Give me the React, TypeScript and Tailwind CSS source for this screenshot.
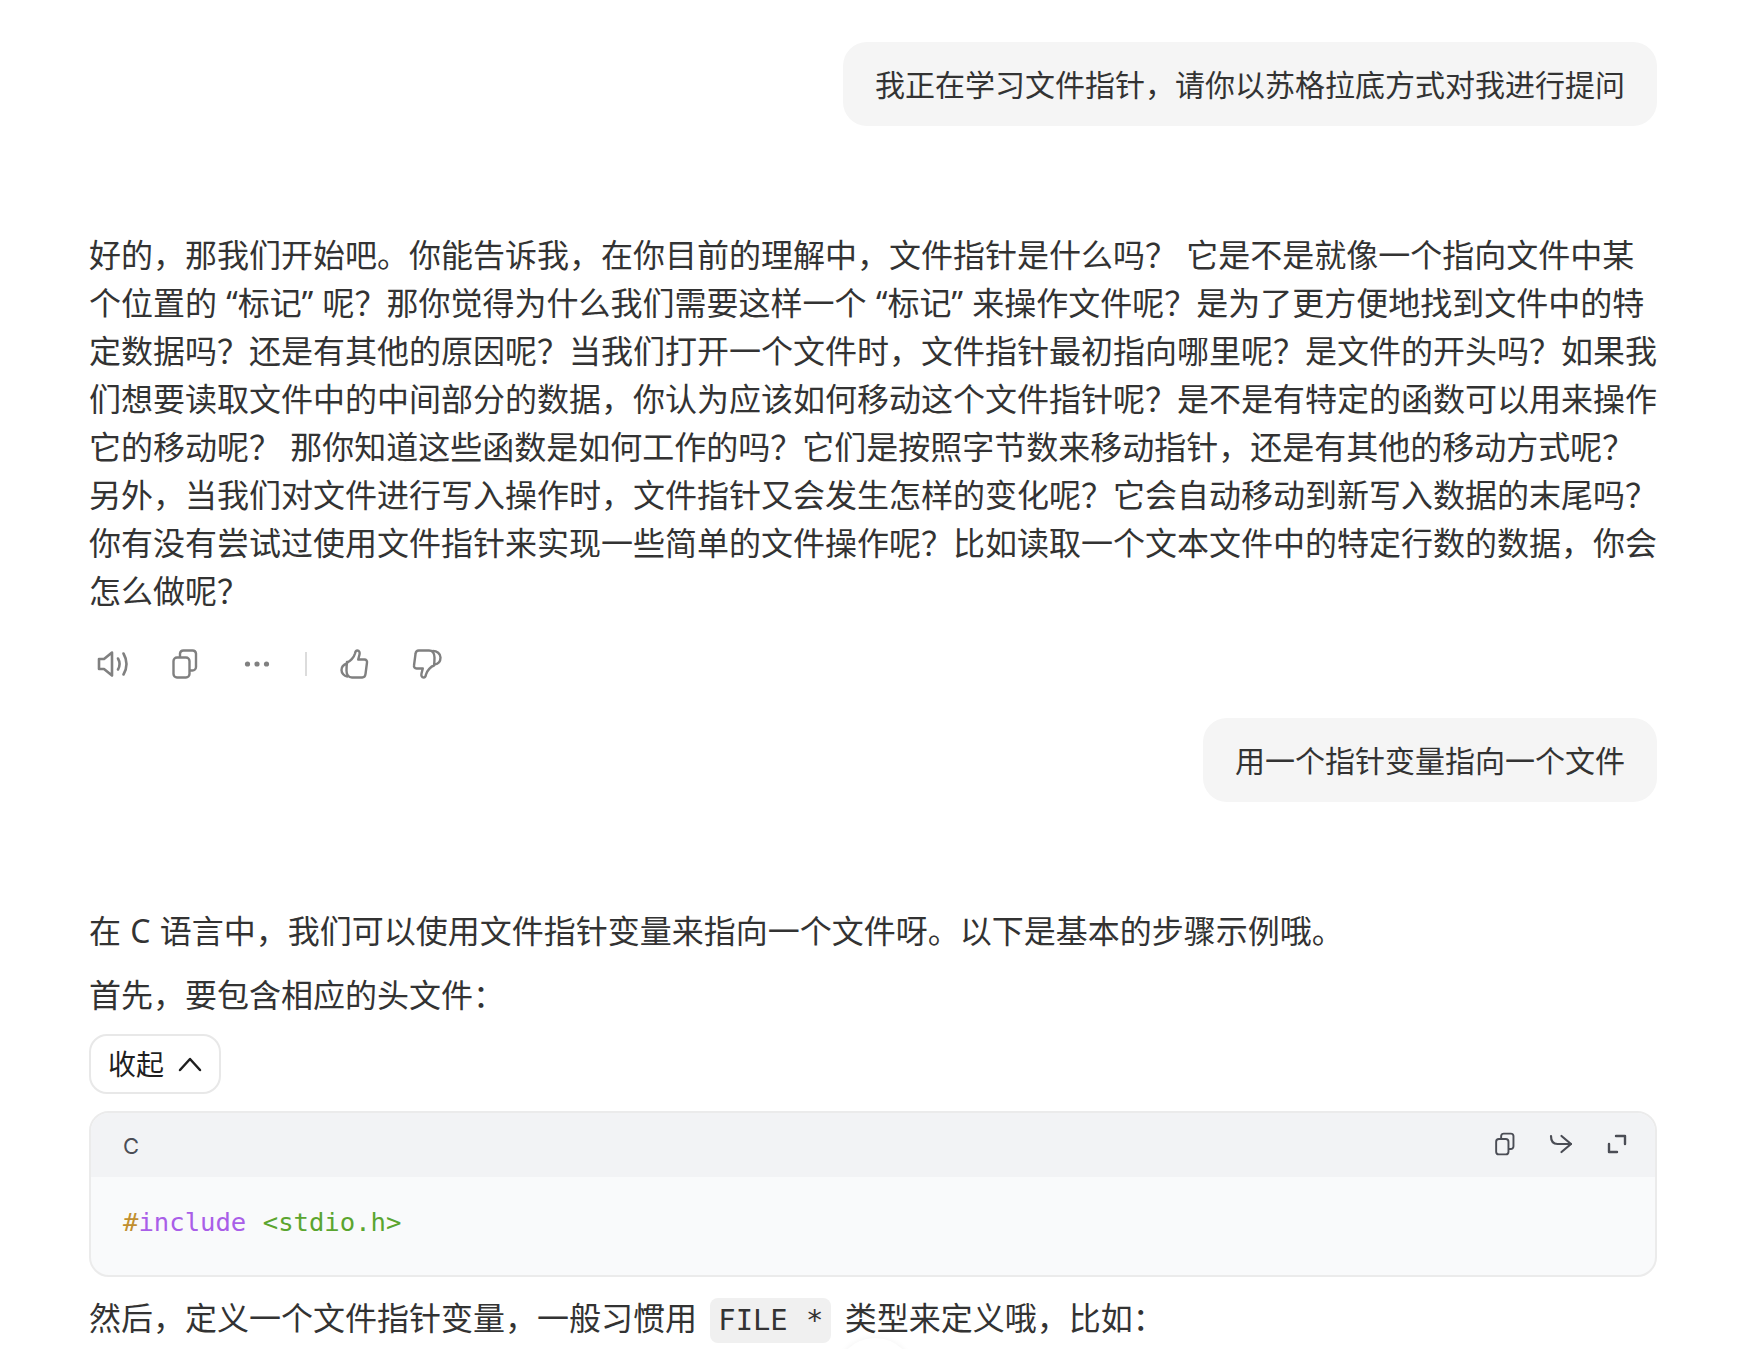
const FONT = "font-['Noto_Sans','Noto_Sans_CJK_SC',sans-serif]";

const answer =
  "好的，那我们开始吧。你能告诉我，在你目前的理解中，文件指针是什么吗？ 它是不是就像一个指向文件中某个位置的 “标记” 呢？那你觉得为什么我们需要这样一个 “标记” 来操作文件呢？是为了更方便地找到文件中的特定数据吗？还是有其他的原因呢？当我们打开一个文件时，文件指针最初指向哪里呢？是文件的开头吗？如果我们想要读取文件中的中间部分的数据，你认为应该如何移动这个文件指针呢？是不是有特定的函数可以用来操作它的移动呢？ 那你知道这些函数是如何工作的吗？它们是按照字节数来移动指针，还是有其他的移动方式呢？另外，当我们对文件进行写入操作时，文件指针又会发生怎样的变化呢？它会自动移动到新写入数据的末尾吗？你有没有尝试过使用文件指针来实现一些简单的文件操作呢？比如读取一个文本文件中的特定行数的数据，你会怎么做呢？";

function UserBubble({ children }: { children: string }) {
  return (
    <div className="flex justify-end">
      <div className="h-[84px] rounded-3xl bg-[#f5f5f5] px-8 pt-[1px] text-[30px] leading-[84px] text-[#333]">
        {children}
      </div>
    </div>
  );
}

function CopyIcon({ width, height, strokeWidth }: { width: number; height: number; strokeWidth: number }) {
  return (
    <svg width={width} height={height} viewBox="0 0 26 30" fill="none" stroke="currentColor" strokeWidth={strokeWidth}>
      <rect x="1.500" y="8.500" width="16" height="20" rx="3.500" />
      <path d="M8 8.500V4.500A3.500 3.500 0 0 1 11.500 1.500h9A3.500 3.500 0 0 1 24 4.500V18a3.500 3.500 0 0 1-3.500 3.500h-3" />
    </svg>
  );
}

function ActionBar() {
  return (
    <div className="mt-[29px] flex h-10 items-center pl-[8px] text-[#808080]">
      <svg width="32" height="28" viewBox="0 0 32 28" fill="none" stroke="currentColor" strokeWidth="2.600" strokeLinecap="round" strokeLinejoin="round">
        <path d="M2 9v10h5l8 6.500V2.500L7 9H2z" />
        <path d="M21 8.500c2 3.500 2 7.500 0 11" />
        <path d="M26.500 3.500c3.700 6.500 3.700 14.500 0 21" />
      </svg>
      <div className="ml-[43px]">
        <CopyIcon width={26} height={30} strokeWidth={2.400} />
      </div>
      <svg className="ml-[46px]" width="26" height="8" viewBox="0 0 26 8" fill="currentColor">
        <circle cx="3.500" cy="4" r="2.600" />
        <circle cx="13" cy="4" r="2.600" />
        <circle cx="22.500" cy="4" r="2.600" />
      </svg>
      <div className="ml-[35px] h-6 w-0.5 bg-[#dcdcdc]" />
      <svg className="ml-[33px]" width="30" height="30" viewBox="0 0 30 30" fill="none" stroke="currentColor" strokeWidth="2.400" strokeLinecap="round" strokeLinejoin="round">
        <path d="M7 13.500c3-1 7-5 8-9 .300-1.800 1-3 2.300-3 2 0 2.700 2 2.200 4l-1.300 5h6.300c1.800 0 2.800 1.500 2.500 3l-1.500 11.500c-.200 2-1.500 3.500-3.300 3.500H12c-3.500 0-5.500-3-5.500-7 0-3 .200-6 .500-8.500z" />
        <path d="M7 14.500c-3 1-5.500 3.500-5.500 6.500s2.500 6 5.800 6.500" />
      </svg>
      <svg className="ml-[42px]" width="30" height="30" viewBox="0 0 30 30" fill="none" stroke="currentColor" strokeWidth="2.400" strokeLinecap="round" strokeLinejoin="round">
        <path d="M22 16.500c-3 1-7 5-8 9-.300 1.800-1 3-2.300 3-2 0-2.700-2-2.200-4l1.300-5H4.500c-1.800 0-2.800-1.500-2.500-3l1.500-11.500C3.700 3 5 1.500 6.800 1.500H17c3.500 0 5.500 3 5.500 7 0 3-.200 6-.500 8z" />
        <path d="M21 2c3.800 0 7.500 2.500 7.500 6.500S26 15 22.500 15.500" />
      </svg>
    </div>
  );
}

function CodeBlock() {
  return (
    <div className="mt-[17px] overflow-hidden rounded-[20px] border-2 border-[#ebebeb] bg-[#f9fafb]">
      <div className="flex h-[64px] items-center justify-between bg-[#f2f3f5] pl-[32px] pr-[27px] text-[#4b4d55]">
        <span className="pt-[2px] font-['Inter',sans-serif] text-[22px]">C</span>
        <div className="flex items-center pb-[2px]">
          <CopyIcon width={20} height={24} strokeWidth={2.500} />
          <svg className="ml-[34px]" width="24" height="20" viewBox="0 0 24 20" fill="none" stroke="currentColor" strokeWidth="2.200" strokeLinecap="round" strokeLinejoin="round">
            <path d="M2 2c0 5 2 8 6.500 8H22" />
            <path d="M12.500 2l9.500 8-9.500 8" />
          </svg>
          <svg className="ml-[33px]" width="22" height="22" viewBox="0 0 22 22" fill="none" stroke="currentColor" strokeWidth="2.400" strokeLinecap="round" strokeLinejoin="round">
            <path d="M10 3h9v8" />
            <path d="M3 11v8h8" />
          </svg>
        </div>
      </div>
      <div className="h-[98px] pl-[32px] font-['DejaVu_Sans_Mono',monospace] text-[25.6px] leading-[90px]">
        <span className="text-[#c18f2f]">#</span>
        <span className="text-[#a95ee8]">include</span> <span className="text-[#5ba52f]">&lt;stdio.h&gt;</span>
      </div>
    </div>
  );
}

export default function App() {
  return (
    <div className={`${FONT} relative h-[1349px] overflow-hidden bg-white pl-[89px] pr-[88px] pt-[42px] [word-spacing:1px]`}>
      <UserBubble>我正在学习文件指针，请你以苏格拉底方式对我进行提问</UserBubble>
      <p className="mt-[105px] text-[32px] leading-[48px] text-[#333]">{answer}</p>
      <ActionBar />
      <div className="mt-[34px]">
        <UserBubble>用一个指针变量指向一个文件</UserBubble>
      </div>
      <p className="mt-[105px] text-[32px] leading-[48px] text-[#333]">
        在 C 语言中，我们可以使用文件指针变量来指向一个文件呀。以下是基本的步骤示例哦。
      </p>
      <p className="mt-4 text-[32px] leading-[48px] text-[#333]">首先，要包含相应的头文件：</p>
      <button className="mt-[15px] flex h-[60px] w-[132px] items-center justify-center gap-[14px] rounded-[18px] border-2 border-[#e8e8e8] bg-white text-[28px] text-[#1f1f1f]">
        收起
        <svg width="24" height="16" viewBox="0 0 24 16" fill="none" stroke="currentColor" strokeWidth="2.500" strokeLinecap="round" strokeLinejoin="round">
          <path d="M2 14L12 3l10 11" />
        </svg>
      </button>
      <CodeBlock />
      <p className="mt-[17px] text-[32px] leading-[48px] text-[#333]">
        然后，定义一个文件指针变量，一般习惯用{" "}
        <code className="mx-1 inline-block h-[45px] rounded-lg bg-[#f0f0f0] px-2 font-['DejaVu_Sans_Mono',monospace] text-[28.8px] leading-[45px]">FILE *</code>{" "}
        类型来定义哦，比如：
      </p>
      {/* 滚动到底部按钮，只露出一点 */}
      <div className="absolute left-[835px] top-[1338px] size-20 rounded-full bg-white shadow-[0_0_6px_rgba(0,0,0,0.05)]" />
    </div>
  );
}
